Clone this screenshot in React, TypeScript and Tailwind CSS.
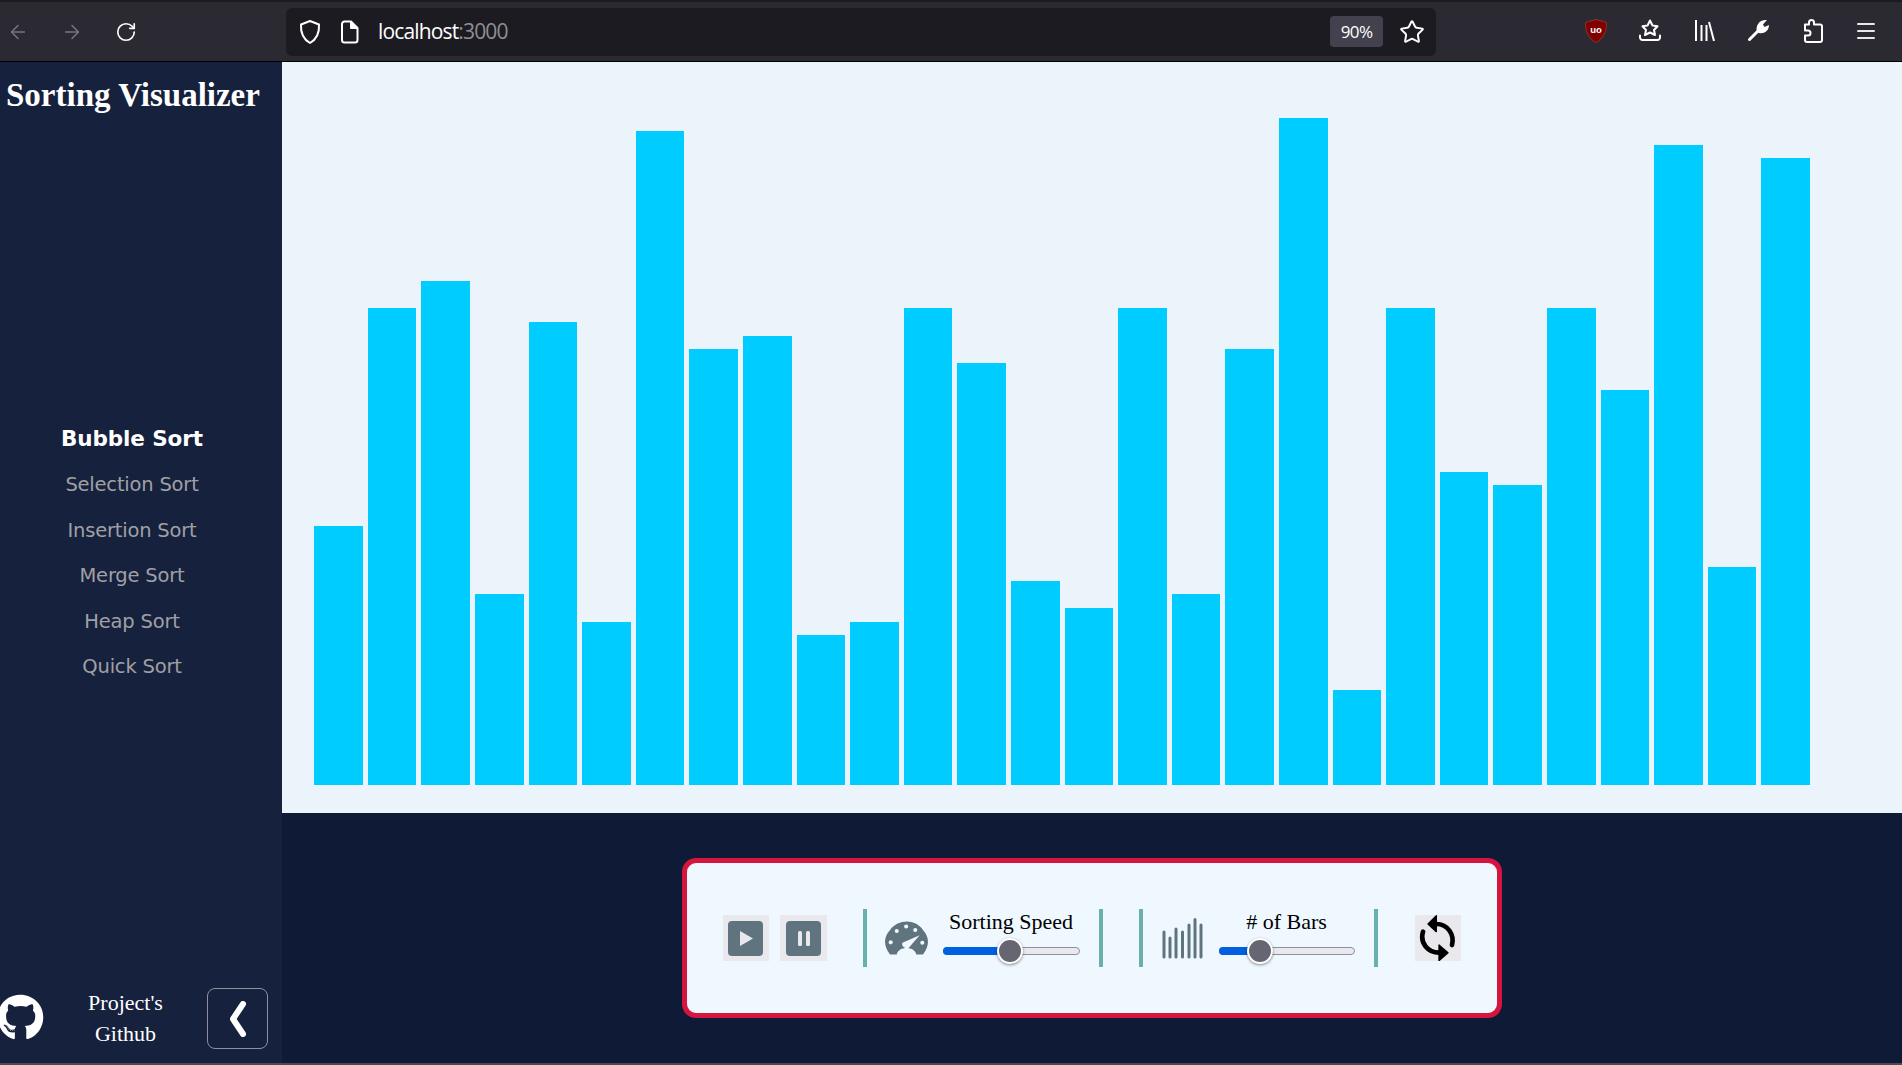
import { ArrowLeft, ArrowRight, RotateCw, Star } from 'lucide-react';
import { FaGithub } from 'react-icons/fa';

const SERIF = "font-['Liberation_Serif',serif]";

// bar values, one unit is 13.62px
const BARS = [19, 35, 37, 14, 34, 12, 48, 32, 33, 11, 12, 35, 31, 15, 13, 35, 14, 32, 49, 7, 35, 23, 22, 35, 29, 47, 16, 46];
const ALGORITHMS = ['Selection Sort', 'Insertion Sort', 'Merge Sort', 'Heap Sort', 'Quick Sort'];

function Toolbar() {
  return (
    <header className="h-[62px] shrink-0 bg-[#2b2a33] border-t-2 border-t-[#1c1b22] border-b border-b-black flex items-center text-white font-['Open_Sans',sans-serif]">
      <ArrowLeft className="ml-[7px] w-[22px] h-[22px] text-[#77767d]" strokeWidth={1.6} />
      <ArrowRight className="ml-[32px] w-[22px] h-[22px] text-[#77767d]" strokeWidth={1.6} />
      <RotateCw className="ml-[32px] w-[22px] h-[22px] text-white" strokeWidth={1.8} />
      <div className="ml-[149px] w-[1150px] h-[48px] rounded-[6px] bg-[#1c1b22] flex items-center">
        <svg className="ml-[13px] w-[22px] h-[26px]" viewBox="0 0 22 26" fill="none" stroke="white" strokeWidth="2" strokeLinejoin="round">
          <path d="M11 2 L20 5.5 C20.5 14 18 20 11 24 C4 20 1.5 14 2 5.5 Z" />
        </svg>
        <svg className="ml-[20px] w-[18px] h-[24px]" viewBox="0 0 18 24" fill="none" stroke="white" strokeWidth="2" strokeLinejoin="round">
          <path d="M3.5 1.5 H10 L16.5 8 V20 A2.5 2.5 0 0 1 14 22.5 H3.5 A2.5 2.5 0 0 1 1 20 V4 A2.5 2.5 0 0 1 3.5 1.5 Z" />
          <path d="M10 1.5 V8 H16.5" fill="white" />
        </svg>
        <div className="ml-[19px] text-[21px] tracking-[-0.85px] text-white">
          localhost<span className="text-[#8f8f94]">:3000</span>
        </div>
        <div className="ml-auto w-[53px] h-[31px] rounded-[4px] bg-[#42414d] flex items-center justify-center text-[17px] tracking-[-0.6px]">90%</div>
        <Star className="ml-[16px] mr-[11px] w-[26px] h-[26px]" strokeWidth={1.8} />
      </div>
      <div className="flex-1 relative h-full">
        {/* uBlock shield */}
        <svg className="absolute left-[149px] top-[17px] w-[22px] h-[24px]" viewBox="0 0 22 24">
          <path d="M11 0.500 L21.500 3.500 C22 12 18 20 11 23.500 C4 20 0 12 0.500 3.500 Z" fill="#800000" stroke="#a33" strokeWidth="0.8" />
          <text x="11" y="14" textAnchor="middle" fontSize="9.500" fontWeight="700" fill="white" fontFamily="Liberation Sans, sans-serif">uo</text>
        </svg>
        <svg className="absolute left-[203px] top-[17px] w-[22px] h-[22px]" viewBox="0 0 22 22" fill="none" stroke="white" strokeWidth="2" strokeLinejoin="round" strokeLinecap="round">
          <path d="M11 1.500 L13.500 6.500 L18.500 7.200 L15 11 L16 16 L11 13.500 L6 16 L7 11 L3.500 7.200 L8.500 6.500 Z" />
          <path d="M1 16.500 V18.500 A2.500 2.500 0 0 0 3.500 21 H18.500 A2.500 2.500 0 0 0 21 18.500 V16.500" />
        </svg>
        <svg className="absolute left-[259px] top-[18px] w-[20px] h-[21px]" viewBox="0 0 20 21" fill="none" stroke="white" strokeWidth="2">
          <path d="M1 0 V21 M6.500 5 V21 M11.500 5 V21 M14 2 L19 21" />
        </svg>
        <svg className="absolute left-[311px] top-[17px] w-[23px] h-[23px]" viewBox="0 0 23 23">
          <path d="M2.500 20.500 L11.500 11.500" fill="none" stroke="white" strokeWidth="3" strokeLinecap="round" />
          <path d="M10 13 C8 6 13 0 20 1 L16 5.500 L17.500 8 L22 6 C22 12 17 15 12 14 Z" fill="white" />
        </svg>
        <svg className="absolute left-[367px] top-[17px] w-[20px] h-[24px]" viewBox="0 0 20 24" fill="none" stroke="white" strokeWidth="2" strokeLinejoin="round">
          <path d="M6 5.500 V3.500 A2.500 2.500 0 0 1 11 3.500 V5.500 H17 A2 2 0 0 1 19 7.500 V21 A2 2 0 0 1 17 23 H4 A2 2 0 0 1 2 21 V16.500 H5 A2.500 2.500 0 0 0 5 11.500 H2 V5.500 Z" />
        </svg>
        <svg className="absolute left-[421px] top-[21px] w-[18px] h-[16px]" viewBox="0 0 18 16" fill="none" stroke="#e8e8ea" strokeWidth="2" strokeLinecap="round">
          <path d="M1 1 H17 M1 8 H17 M1 15 H17" />
        </svg>
      </div>
    </header>
  );
}

function Sidebar() {
  return (
    <aside className="w-[282px] shrink-0 bg-[#16213e] flex flex-col text-white">
      <h1 className={`${SERIF} mt-[12px] ml-[6px] text-[33px] leading-[42px] font-bold whitespace-nowrap`}>Sorting Visualizer</h1>
      <nav className="mt-[300px] pr-[18px] flex flex-col items-center font-['DejaVu_Sans',sans-serif] text-[19.5px] tracking-[-0.2px] text-[#a0a0a4]">
        <div className="h-[46px] leading-[46px] text-[21.5px] font-bold text-white tracking-[-0.1px]">Bubble Sort</div>
        {ALGORITHMS.map((name) => (
          <div key={name} className="h-[45.6px] leading-[45.6px]">{name}</div>
        ))}
      </nav>
      <div className="mt-auto mb-[14px] flex items-center overflow-hidden">
        <FaGithub className="-ml-[3px] -mt-[2px] w-[47px] h-[47px] shrink-0" />
        <a className={`${SERIF} w-[163px] -mt-[1px] text-center text-[22px] leading-[31px] text-white`}>Project's<br />Github</a>
        <button className="w-[61px] h-[61px] shrink-0 rounded-[8px] border border-[#8f8f9d] flex items-center justify-center">
          <svg className="w-[18px] h-[36px]" viewBox="0 0 18 36" fill="none" stroke="white" strokeWidth="6" strokeLinecap="round" strokeLinejoin="round">
            <path d="M14 3 L4 18 L14 33" />
          </svg>
        </button>
      </div>
    </aside>
  );
}

function Slider({ label, width, percent }: { label: string; width: number; percent: number }) {
  return (
    <div className="flex flex-col items-center mb-[12px]" style={{ width }}>
      <div className={`${SERIF} text-[22px] leading-[26px] text-black whitespace-nowrap`}>{label}</div>
      <div className="relative w-full h-[8px] mt-[12px] rounded-full bg-[#e9e9ed] border border-[#8f8f9d]">
        <div className="h-[8px] -mt-px -ml-px rounded-full bg-[#0060df]" style={{ width: `${percent}%` }} />
        <div
          className="absolute top-[-10px] w-[26px] h-[26px] -ml-[13px] rounded-full bg-[#666673] border-2 border-white shadow-[0_1px_3px_rgba(0,0,0,0.45)]"
          style={{ left: `${percent}%` }}
        />
      </div>
    </div>
  );
}

function Divider({ className }: { className: string }) {
  return <div className={`w-[4px] h-[58px] shrink-0 bg-[#68b0ab] ${className}`} />;
}

function ControlPanel() {
  return (
    <div className="w-[820px] h-[160px] rounded-[14px] border-[5px] border-[#d5143f] bg-[#f0f8ff] flex items-center">
      <button className="ml-[36px] w-[46px] h-[46px] bg-[#e9e9ed] flex items-center justify-center">
        <svg className="w-[35px] h-[35px]" viewBox="0 0 35 35">
          <rect width="35" height="35" rx="4" fill="#607480" />
          <path d="M12 10 L25 17.500 L12 25 Z" fill="#e9e9ed" />
        </svg>
      </button>
      <button className="ml-[11px] w-[47px] h-[46px] bg-[#e9e9ed] flex items-center justify-center">
        <svg className="w-[35px] h-[35px]" viewBox="0 0 35 35">
          <rect width="35" height="35" rx="4" fill="#607480" />
          <rect x="12" y="10" width="4" height="15" rx="1.500" fill="#e9e9ed" />
          <rect x="20" y="10" width="4" height="15" rx="1.500" fill="#e9e9ed" />
        </svg>
      </button>
      <Divider className="ml-[36px]" />
      {/* gauge */}
      <svg className="ml-[18px] w-[43px] h-[34px] shrink-0" viewBox="645 212 128 100">
        <path d="M660 311 C640 285 640 260 660 238 C685 205 735 205 758 238 C778 260 778 285 758 311 L738 311 C735 298 722 292 709 292 C696 292 683 298 680 311 Z" fill="#607480" />
        <path d="M697 276 L748 254 L716 291 C706 295 692 286 697 276 Z" fill="#f0f8ff" />
        <circle cx="662" cy="275" r="6" fill="#f0f8ff" />
        <circle cx="680" cy="241" r="6" fill="#f0f8ff" />
        <circle cx="708" cy="228" r="6" fill="#f0f8ff" />
        <circle cx="735" cy="238" r="6" fill="#f0f8ff" />
        <circle cx="756" cy="276" r="6" fill="#f0f8ff" />
      </svg>
      <div className="ml-[15px]"><Slider label="Sorting Speed" width={137} percent={49} /></div>
      <Divider className="ml-[19px]" />
      <Divider className="ml-[36px]" />
      <svg className="ml-[19px] w-[41px] h-[41px] shrink-0" viewBox="0 0 41 41" fill="none" stroke="#607480" strokeWidth="3" strokeLinecap="round">
        <path d="M2 14 V39 M8 20 V39 M14 11 V39 M20.500 14 V39 M27 7 V39 M33 1.500 V39 M39 7 V39" />
      </svg>
      <div className="ml-[16px]"><Slider label="# of Bars" width={136} percent={30} /></div>
      <Divider className="ml-[19px]" />
      <button className="ml-[37px] w-[46px] h-[46px] bg-[#e9e9ed] flex items-center justify-center">
        <svg className="w-[40px] h-[46px]" viewBox="985 195 120 138">
          <path d="M1040 222 C1075 222 1095 255 1087 285" fill="none" stroke="black" strokeWidth="14" strokeLinecap="round" />
          <path d="M1040 197 L1015 222 L1040 245 Z" fill="black" stroke="black" strokeWidth="4" strokeLinejoin="round" />
          <path d="M1048 308 C1015 308 990 280 1000 245" fill="none" stroke="black" strokeWidth="14" strokeLinecap="round" />
          <path d="M1048 285 L1075 308 L1048 332 Z" fill="black" stroke="black" strokeWidth="4" strokeLinejoin="round" />
        </svg>
      </button>
    </div>
  );
}

export default function App() {
  return (
    <div className="w-full h-screen flex flex-col overflow-hidden bg-[#0f1a36]">
      <Toolbar />
      <div className="flex-1 flex min-h-0">
        <Sidebar />
        <main className="flex-1 flex flex-col min-w-0">
          <section className="h-[751px] shrink-0 bg-[#ebf4fb] pl-[32.3px] pb-[28px] flex items-end gap-[5.05px]">
            {BARS.map((value, i) => (
              <div key={i} className="w-[48.55px] shrink-0 bg-[#00ccff]" style={{ height: value * 13.62 }} />
            ))}
          </section>
          <section className="flex-1 flex justify-center pt-[45px] pr-[1px]">
            <ControlPanel />
          </section>
        </main>
      </div>
      <div className="h-[2px] shrink-0 bg-[#4a4a4f]" />
    </div>
  );
}
